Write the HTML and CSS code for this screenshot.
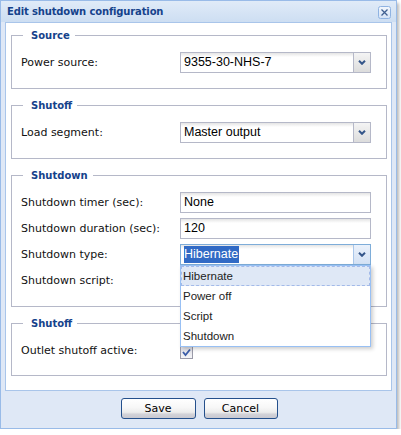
FILE: index.html
```html
<!DOCTYPE html>
<html>
<head>
<meta charset="utf-8">
<link rel="stylesheet" href="styles.css">
</head>
<body>
<div class="win">
  <div class="hdr">
    <span class="title">Edit shutdown configuration</span>
    <span class="close"><svg width="13" height="13" viewBox="0 0 13 13"><defs><linearGradient id="cg" x1="0" y1="0" x2="0" y2="1"><stop offset="0" stop-color="#f3f7fd"/><stop offset="1" stop-color="#d3e2f6"/></linearGradient></defs><rect x="0.5" y="0.5" width="12" height="12" rx="2" fill="url(#cg)" stroke="#8fb3e2"/><path d="M3.5 3.5 L9.5 9.5 M9.5 3.5 L3.5 9.5" stroke="#3f5f91" stroke-width="1.3"/></svg></span>
  </div>
  <div class="body">
    <fieldset class="fs">
      <legend class="lg">Source</legend>
      <div class="row">
        <span class="lbl">Power source:</span>
        <div class="combo"><span class="val">9355-30-NHS-7</span><span class="trig"><svg width="8" height="5" viewBox="0 0 8 5"><path d="M1 0.8 L4 3.8 L7 0.8" fill="none" stroke="#35568a" stroke-width="2"/></svg></span></div>
      </div>
    </fieldset>
    <fieldset class="fs">
      <legend class="lg">Shutoff</legend>
      <div class="row">
        <span class="lbl">Load segment:</span>
        <div class="combo"><span class="val">Master output</span><span class="trig"><svg width="8" height="5" viewBox="0 0 8 5"><path d="M1 0.8 L4 3.8 L7 0.8" fill="none" stroke="#35568a" stroke-width="2"/></svg></span></div>
      </div>
    </fieldset>
    <fieldset class="fs">
      <legend class="lg">Shutdown</legend>
      <div class="rows">
        <div class="row">
          <span class="lbl">Shutdown timer (sec):</span>
          <div class="input"><span class="val">None</span></div>
        </div>
        <div class="row">
          <span class="lbl">Shutdown duration (sec):</span>
          <div class="input"><span class="val">120</span></div>
        </div>
        <div class="row">
          <span class="lbl">Shutdown type:</span>
          <div class="combo focus">
            <span class="val"><span class="sel">Hibernate</span></span><span class="trig"><svg width="8" height="5" viewBox="0 0 8 5"><path d="M1 0.8 L4 3.8 L7 0.8" fill="none" stroke="#35568a" stroke-width="2"/></svg></span>
            <ul class="list">
              <li class="item cur">Hibernate</li>
              <li class="item">Power off</li>
              <li class="item">Script</li>
              <li class="item">Shutdown</li>
            </ul>
          </div>
        </div>
        <div class="row">
          <span class="lbl">Shutdown script:</span>
          <div class="input"><span class="val"></span></div>
        </div>
      </div>
    </fieldset>
    <fieldset class="fs">
      <legend class="lg">Shutoff</legend>
      <div class="row short">
        <span class="lbl">Outlet shutoff active:</span>
        <span class="chk"><svg width="13" height="13" viewBox="0 0 13 13"><defs><linearGradient id="kg" x1="0" y1="0" x2="0" y2="1"><stop offset="0" stop-color="#dcdce4"/><stop offset="1" stop-color="#f6f6f8"/></linearGradient></defs><rect x="0.5" y="0.5" width="12" height="12" fill="url(#kg)" stroke="#9a9aa8"/><path d="M3 6 L5.5 9 L10 3.5" fill="none" stroke="#3a5ca8" stroke-width="1.8"/></svg></span>
      </div>
    </fieldset>
  </div>
  <div class="foot">
    <button class="btn save">Save</button>
    <button class="btn cancel">Cancel</button>
  </div>
</div>
</body>
</html>
```
FILE: styles.css
```css
html, body {
  margin: 0;
  padding: 0;
  background: #ffffff;
}
body {
  font-family: "DejaVu Sans", sans-serif;
  font-size: 11px;
  color: #000;
}
.win {
  width: 397px;
  height: 429px;
  box-sizing: border-box;
  border: 1px solid #99bbe8;
  background: #dfe8f6;
  box-shadow: 2px 3px 3px rgba(0, 0, 0, 0.28);
  display: flex;
  flex-direction: column;
}
.hdr {
  height: 21px;
  flex: 0 0 21px;
  display: flex;
  align-items: center;
  justify-content: space-between;
  padding: 0 5px 0 6px;
  background: linear-gradient(#e0ebf8, #cddef2);
}
.title {
  font-weight: bold;
  font-size: 10px;
  letter-spacing: -0.15px;
  color: #15428b;
  line-height: 21px;
}
.close {
  display: flex;
  width: 13px;
  height: 13px;
  margin-top: 1px;
}
.body {
  margin: 0 4px;
  border: 1px solid #a9c5ea;
  background: #ffffff;
  padding: 6px 4px 14px 5px;
  display: flex;
  flex-direction: column;
  gap: 10px;
}
.fs {
  margin: 0;
  min-width: 0;
  border: 1px solid #b5b8c8;
  padding: 10px 14px 15px 9px;
}
.lg {
  margin-left: 2px;
  padding: 0 5px 0 8px;
  font-weight: bold;
  font-size: 10px;
  line-height: 13px;
  color: #15428b;
}
.rows {
  display: flex;
  flex-direction: column;
  gap: 5px;
}
.row {
  display: flex;
  align-items: center;
  height: 21px;
}
.row.short {
  height: 20px;
}
.lbl {
  width: 159px;
  flex: 0 0 159px;
  line-height: 21px;
  color: #111;
}
.combo, .input {
  position: relative;
  display: flex;
  width: 191px;
  height: 21px;
  box-sizing: border-box;
  border: 1px solid #b5b8c8;
  background: #fff;
}
.combo.focus {
  border-color: #7eadd9;
}
.val {
  flex: 1;
  padding-left: 3px;
  font-family: "Liberation Sans", sans-serif;
  font-size: 12.5px;
  line-height: 19px;
  color: #000;
  background: linear-gradient(#e4e4e4 0px, #ffffff 4px);
}
.sel {
  background: #316ac5;
  color: #fff;
  padding: 1px 1px 2px 0;
}
.trig {
  width: 16px;
  flex: 0 0 16px;
  border-left: 1px solid #b5b8c8;
  display: flex;
  align-items: center;
  justify-content: center;
  background: linear-gradient(#f4f4f4, #dcdcdc);
}
.focus .trig {
  border-left-color: #a9c6ea;
  background: linear-gradient(#eaf1fb, #d3e1f4);
}
.list {
  position: absolute;
  left: -1px;
  top: calc(100% + 1px);
  width: 191px;
  box-sizing: border-box;
  margin: 0;
  padding: 0;
  list-style: none;
  border: 1px solid #98c0f4;
  background: #fff;
  box-shadow: 2px 2px 4px rgba(0, 0, 0, 0.2);
  z-index: 5;
}
.item {
  height: 20px;
  box-sizing: border-box;
  border: 1px solid transparent;
  padding-left: 1px;
  font-family: "Liberation Sans", sans-serif;
  font-size: 11.5px;
  line-height: 18px;
  color: #222;
}
.item.cur {
  background: #dfe8f6;
  border: 1px dashed #a3bae9;
}
.chk {
  display: flex;
  width: 13px;
  height: 13px;
  margin-top: 4px;
}
.foot {
  flex: 1;
  display: flex;
  justify-content: center;
  align-items: flex-start;
  gap: 8px;
  padding-top: 7px;
  padding-left: 1px;
}
.btn {
  height: 21px;
  box-sizing: border-box;
  border: 1px solid #24508c;
  border-radius: 3px;
  padding: 0;
  font-family: "DejaVu Sans", sans-serif;
  font-size: 11px;
  color: #000;
  background: linear-gradient(#ffffff 0%, #f7f7f7 45%, #ececec 70%, #d2d2d8 80%, #c9c9d1 100%);
}
.btn.save {
  width: 75px;
}
.btn.cancel {
  width: 74px;
}
```
